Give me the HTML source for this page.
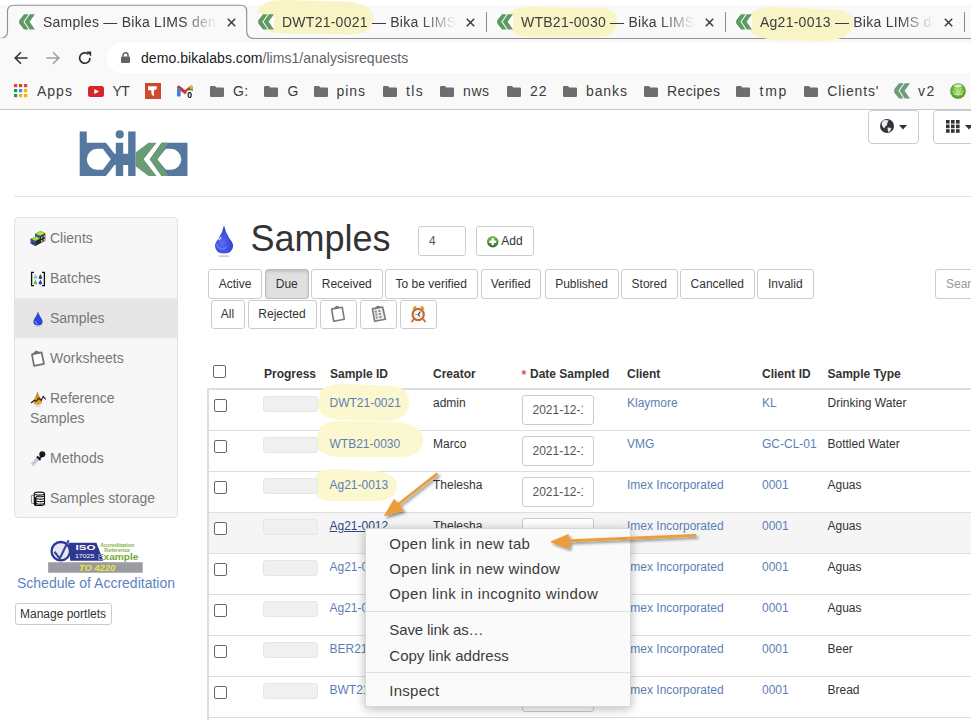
<!DOCTYPE html><html><head><meta charset="utf-8"><style>
html,body{margin:0;padding:0;width:971px;height:720px;overflow:hidden;background:#fff;font-family:"Liberation Sans",sans-serif;}
.a{position:absolute;box-sizing:border-box;}
.t{position:absolute;white-space:nowrap;line-height:normal;}
svg{position:absolute;overflow:visible;}
</style></head><body>

<div class="a" style="left:0px;top:0px;width:971px;height:110px;background:#f9f9f9;"></div>
<div class="a" style="left:0px;top:0px;width:971px;height:5px;background:#fff;"></div>
<div class="a" style="left:247px;top:37.5px;width:724px;height:1.2px;background:#8e8e8e;"></div>
<svg style="left:0;top:0" width="260" height="40"><path d="M0 38.5 Q7.5 38.5 7.5 31 L7.5 11.5 Q7.5 5.3 13.7 5.3 L240.5 5.3 Q246.7 5.3 246.7 11.5 L246.7 31 Q246.7 38.5 254.2 38.5" fill="#f9f9f9" stroke="#8e8e8e" stroke-width="1.1"/><rect x="0" y="38.2" width="251" height="2" fill="#f9f9f9"/></svg>
<div class="a" style="left:485.5px;top:12px;width:1px;height:20px;background:#8a8a8a;"></div>
<div class="a" style="left:724.5px;top:12px;width:1px;height:20px;background:#8a8a8a;"></div>
<div class="a" style="left:963.5px;top:12px;width:1px;height:20px;background:#8a8a8a;"></div>
<svg style="left:0;top:0" width="971" height="45"><g fill="#f9f4c6"><path d="M258 12 Q259 0 285 0 L345 1.5 Q373 3 373 18 Q373 34.6 350 34.6 L285 33.5 Q258 33 258 20 Z"/><path d="M508 20 Q508 7 528 7 L600 7.5 Q617 8 617 21 Q617 37 598 37 L530 37 Q508 37 508 22 Z"/><path d="M748 18 Q752 7 775 7 L840 10 Q854 12 853 24 Q852 41 820 41 L775 40 Q750 38 748 25 Z"/></g></svg>
<svg style="left:19px;top:14px" width="16" height="16" viewBox="0 0 16 16"><rect width="16" height="16" fill="#fff"/><path d="M0.2 6.2 L5 0.2 L9.6 0.2 L4.4 7.8 L9.6 15.4 L5 15.4 L0.2 9.4 Z" fill="#5f9a62"/><path d="M5.6 7.8 L10.8 0.2 L16 0.2 L10.6 7.8 L16 15.4 L10.8 15.4 Z" fill="#5f9a62"/></svg>
<div class="t" style="left:43px;top:13.5px;font-size:14px;color:#3c3c3c;letter-spacing:0.25px;width:174px;overflow:hidden;-webkit-mask-image:linear-gradient(to right,#000 80%,transparent 100%);">Samples — Bika LIMS dem</div>
<svg style="left:227px;top:18px" width="9" height="9" viewBox="0 0 9 9"><path d="M0.8 0.8 L8.2 8.2 M8.2 0.8 L0.8 8.2" stroke="#3c3c3c" stroke-width="1.5"/></svg>
<svg style="left:258px;top:14px" width="16" height="16" viewBox="0 0 16 16"><rect width="16" height="16" fill="#fff"/><path d="M0.2 6.2 L5 0.2 L9.6 0.2 L4.4 7.8 L9.6 15.4 L5 15.4 L0.2 9.4 Z" fill="#5f9a62"/><path d="M5.6 7.8 L10.8 0.2 L16 0.2 L10.6 7.8 L16 15.4 L10.8 15.4 Z" fill="#5f9a62"/></svg>
<div class="t" style="left:282px;top:13.5px;font-size:14px;color:#3c3c3c;letter-spacing:0.25px;width:174px;overflow:hidden;-webkit-mask-image:linear-gradient(to right,#000 80%,transparent 100%);">DWT21-0021 — Bika LIMS</div>
<svg style="left:466px;top:18px" width="9" height="9" viewBox="0 0 9 9"><path d="M0.8 0.8 L8.2 8.2 M8.2 0.8 L0.8 8.2" stroke="#3c3c3c" stroke-width="1.5"/></svg>
<svg style="left:497px;top:14px" width="16" height="16" viewBox="0 0 16 16"><rect width="16" height="16" fill="#fff"/><path d="M0.2 6.2 L5 0.2 L9.6 0.2 L4.4 7.8 L9.6 15.4 L5 15.4 L0.2 9.4 Z" fill="#5f9a62"/><path d="M5.6 7.8 L10.8 0.2 L16 0.2 L10.6 7.8 L16 15.4 L10.8 15.4 Z" fill="#5f9a62"/></svg>
<div class="t" style="left:521px;top:13.5px;font-size:14px;color:#3c3c3c;letter-spacing:0.25px;width:174px;overflow:hidden;-webkit-mask-image:linear-gradient(to right,#000 80%,transparent 100%);">WTB21-0030 — Bika LIMS</div>
<svg style="left:705px;top:18px" width="9" height="9" viewBox="0 0 9 9"><path d="M0.8 0.8 L8.2 8.2 M8.2 0.8 L0.8 8.2" stroke="#3c3c3c" stroke-width="1.5"/></svg>
<svg style="left:736px;top:14px" width="16" height="16" viewBox="0 0 16 16"><rect width="16" height="16" fill="#fff"/><path d="M0.2 6.2 L5 0.2 L9.6 0.2 L4.4 7.8 L9.6 15.4 L5 15.4 L0.2 9.4 Z" fill="#5f9a62"/><path d="M5.6 7.8 L10.8 0.2 L16 0.2 L10.6 7.8 L16 15.4 L10.8 15.4 Z" fill="#5f9a62"/></svg>
<div class="t" style="left:760px;top:13.5px;font-size:14px;color:#3c3c3c;letter-spacing:0.25px;width:174px;overflow:hidden;-webkit-mask-image:linear-gradient(to right,#000 80%,transparent 100%);">Ag21-0013 — Bika LIMS de</div>
<svg style="left:944px;top:18px" width="9" height="9" viewBox="0 0 9 9"><path d="M0.8 0.8 L8.2 8.2 M8.2 0.8 L0.8 8.2" stroke="#3c3c3c" stroke-width="1.5"/></svg>
<svg style="left:14px;top:51px" width="14" height="14" viewBox="0 0 14 14"><path d="M13.5 7 L1.5 7 M7 1.2 L1.2 7 L7 12.8" fill="none" stroke="#333" stroke-width="1.6"/></svg>
<svg style="left:46px;top:51px" width="14" height="14" viewBox="0 0 14 14"><path d="M0.5 7 L12.5 7 M7 1.2 L12.8 7 L7 12.8" fill="none" stroke="#9e9e9e" stroke-width="1.6"/></svg>
<svg style="left:78px;top:51px" width="14" height="14" viewBox="0 0 14 14"><path d="M12 7 A5.2 5.2 0 1 1 10.3 3.2" fill="none" stroke="#333" stroke-width="1.7"/><path d="M8.2 0.6 L13.2 0.6 L13.2 5.6 Z" fill="#333"/></svg>
<div class="a" style="left:107px;top:43px;width:880px;height:30px;background:#fff;border-radius:15px;"></div>
<svg style="left:121px;top:52px" width="9" height="11" viewBox="0 0 9 11"><rect x="0" y="4.5" width="9" height="6.5" rx="1" fill="#5f6368"/><path d="M2 4.8 L2 3.2 A2.5 2.5 0 0 1 7 3.2 L7 4.8" fill="none" stroke="#5f6368" stroke-width="1.5"/></svg>
<div class="t" style="left:141px;top:49.5px;font-size:14px;color:#5f6368;letter-spacing:0.05px;"><span style="color:#202124">demo.bikalabs.com</span>/lims1/analysisrequests</div>
<svg style="left:14px;top:84px" width="14" height="14" viewBox="0 0 14 14"><rect x="0" y="0" width="3.2" height="3.2" fill="#db4437"/><rect x="5" y="0" width="3.2" height="3.2" fill="#db4437"/><rect x="10" y="0" width="3.2" height="3.2" fill="#db4437"/><rect x="0" y="5" width="3.2" height="3.2" fill="#0f9d58"/><rect x="5" y="5" width="3.2" height="3.2" fill="#4285f4"/><rect x="10" y="5" width="3.2" height="3.2" fill="#f4b400"/><rect x="0" y="10" width="3.2" height="3.2" fill="#0f9d58"/><rect x="5" y="10" width="3.2" height="3.2" fill="#f4b400"/><rect x="10" y="10" width="3.2" height="3.2" fill="#f4b400"/></svg>
<div class="t" style="left:37px;top:83px;font-size:14px;color:#3c3c3c;letter-spacing:1.0px;">Apps</div>
<svg style="left:88px;top:85.5px" width="16" height="11" viewBox="0 0 16 11"><rect width="16" height="11" rx="2.5" fill="#d4262b"/><path d="M6.3 3 L11 5.5 L6.3 8 Z" fill="#fff"/></svg>
<div class="t" style="left:112.5px;top:83px;font-size:14px;color:#3c3c3c;letter-spacing:-0.5px;">YT</div>
<svg style="left:145px;top:83px" width="16" height="16" viewBox="0 0 16 16"><rect width="16" height="16" fill="#cf4a2d"/><path d="M3 3.3 L11.5 3.3 L12 4.4 L11 7.2 L10.4 6.4 L9 7.2 L8.8 13.6 L6.6 11.6 L6.2 7.2 L3 7.2 Z" fill="#fff"/></svg>
<svg style="left:177px;top:84px" width="17" height="15" viewBox="0 0 17 15"><path d="M1.8 3.2 L8 8.2 L14.2 3.2" fill="none" stroke="#c5392f" stroke-width="3.4" stroke-linejoin="round" stroke-linecap="round"/><rect x="0" y="4.2" width="3.7" height="8.3" rx="0.8" fill="#4a7bea"/><rect x="12.6" y="4.3" width="3.2" height="4" fill="#3e9a48"/><circle cx="14.3" cy="3.3" r="1.7" fill="#e3b52b"/><rect x="9.6" y="6.4" width="6.6" height="8.4" rx="1.5" fill="#fff"/><text x="10.2" y="13.9" font-size="8.6" font-weight="bold" font-family="Liberation Sans" fill="#000">0</text></svg>
<svg style="left:210px;top:85.5px" width="14" height="11" viewBox="0 0 14 11"><path d="M0 1.2 Q0 0 1.2 0 L5 0 L6.3 1.5 L12.8 1.5 Q14 1.5 14 2.7 L14 9.8 Q14 11 12.8 11 L1.2 11 Q0 11 0 9.8 Z" fill="#6e6e6e"/></svg>
<div class="t" style="left:233px;top:83px;font-size:14px;color:#3c3c3c;letter-spacing:0.4px;">G:</div>
<svg style="left:264px;top:85.5px" width="14" height="11" viewBox="0 0 14 11"><path d="M0 1.2 Q0 0 1.2 0 L5 0 L6.3 1.5 L12.8 1.5 Q14 1.5 14 2.7 L14 9.8 Q14 11 12.8 11 L1.2 11 Q0 11 0 9.8 Z" fill="#6e6e6e"/></svg>
<div class="t" style="left:287.5px;top:83px;font-size:14px;color:#3c3c3c;letter-spacing:0.4px;">G</div>
<svg style="left:314px;top:85.5px" width="14" height="11" viewBox="0 0 14 11"><path d="M0 1.2 Q0 0 1.2 0 L5 0 L6.3 1.5 L12.8 1.5 Q14 1.5 14 2.7 L14 9.8 Q14 11 12.8 11 L1.2 11 Q0 11 0 9.8 Z" fill="#6e6e6e"/></svg>
<div class="t" style="left:336.5px;top:83px;font-size:14px;color:#3c3c3c;letter-spacing:0.9px;">pins</div>
<svg style="left:383px;top:85.5px" width="14" height="11" viewBox="0 0 14 11"><path d="M0 1.2 Q0 0 1.2 0 L5 0 L6.3 1.5 L12.8 1.5 Q14 1.5 14 2.7 L14 9.8 Q14 11 12.8 11 L1.2 11 Q0 11 0 9.8 Z" fill="#6e6e6e"/></svg>
<div class="t" style="left:406px;top:83px;font-size:14px;color:#3c3c3c;letter-spacing:1.4px;">tls</div>
<svg style="left:439.5px;top:85.5px" width="14" height="11" viewBox="0 0 14 11"><path d="M0 1.2 Q0 0 1.2 0 L5 0 L6.3 1.5 L12.8 1.5 Q14 1.5 14 2.7 L14 9.8 Q14 11 12.8 11 L1.2 11 Q0 11 0 9.8 Z" fill="#6e6e6e"/></svg>
<div class="t" style="left:463px;top:83px;font-size:14px;color:#3c3c3c;letter-spacing:0.6px;">nws</div>
<svg style="left:507px;top:85.5px" width="14" height="11" viewBox="0 0 14 11"><path d="M0 1.2 Q0 0 1.2 0 L5 0 L6.3 1.5 L12.8 1.5 Q14 1.5 14 2.7 L14 9.8 Q14 11 12.8 11 L1.2 11 Q0 11 0 9.8 Z" fill="#6e6e6e"/></svg>
<div class="t" style="left:530px;top:83px;font-size:14px;color:#3c3c3c;letter-spacing:1.0px;">22</div>
<svg style="left:563px;top:85.5px" width="14" height="11" viewBox="0 0 14 11"><path d="M0 1.2 Q0 0 1.2 0 L5 0 L6.3 1.5 L12.8 1.5 Q14 1.5 14 2.7 L14 9.8 Q14 11 12.8 11 L1.2 11 Q0 11 0 9.8 Z" fill="#6e6e6e"/></svg>
<div class="t" style="left:586px;top:83px;font-size:14px;color:#3c3c3c;letter-spacing:0.9px;">banks</div>
<svg style="left:644px;top:85.5px" width="14" height="11" viewBox="0 0 14 11"><path d="M0 1.2 Q0 0 1.2 0 L5 0 L6.3 1.5 L12.8 1.5 Q14 1.5 14 2.7 L14 9.8 Q14 11 12.8 11 L1.2 11 Q0 11 0 9.8 Z" fill="#6e6e6e"/></svg>
<div class="t" style="left:667px;top:83px;font-size:14px;color:#3c3c3c;letter-spacing:0.4px;">Recipes</div>
<svg style="left:736px;top:85.5px" width="14" height="11" viewBox="0 0 14 11"><path d="M0 1.2 Q0 0 1.2 0 L5 0 L6.3 1.5 L12.8 1.5 Q14 1.5 14 2.7 L14 9.8 Q14 11 12.8 11 L1.2 11 Q0 11 0 9.8 Z" fill="#6e6e6e"/></svg>
<div class="t" style="left:759.6px;top:83px;font-size:14px;color:#3c3c3c;letter-spacing:1.7px;">tmp</div>
<svg style="left:804px;top:85.5px" width="14" height="11" viewBox="0 0 14 11"><path d="M0 1.2 Q0 0 1.2 0 L5 0 L6.3 1.5 L12.8 1.5 Q14 1.5 14 2.7 L14 9.8 Q14 11 12.8 11 L1.2 11 Q0 11 0 9.8 Z" fill="#6e6e6e"/></svg>
<div class="t" style="left:827.3px;top:83px;font-size:14px;color:#3c3c3c;letter-spacing:0.8px;">Clients'</div>
<svg style="left:894px;top:83px" width="16" height="16" viewBox="0 0 16 16"><rect width="16" height="16" fill="#f9f9f9"/><path d="M0.2 6.2 L5 0.2 L9.6 0.2 L4.4 7.8 L9.6 15.4 L5 15.4 L0.2 9.4 Z" fill="#6b9e78"/><path d="M5.6 7.8 L10.8 0.2 L16 0.2 L10.6 7.8 L16 15.4 L10.8 15.4 Z" fill="#6b9e78"/></svg>
<div class="t" style="left:918px;top:83px;font-size:14px;color:#3c3c3c;letter-spacing:1.5px;">v2</div>
<svg style="left:950px;top:83px" width="16" height="16" viewBox="0 0 16 16"><defs><radialGradient id="gb" cx="0.5" cy="0.45" r="0.6"><stop offset="0" stop-color="#9bd860"/><stop offset="0.75" stop-color="#5ea52a"/><stop offset="1" stop-color="#2f6d14"/></radialGradient></defs><circle cx="8" cy="8" r="7.8" fill="url(#gb)"/><g stroke="#d8f5b0" stroke-width="0.9" opacity="0.85"><path d="M8 12 L8 3.5 M8 12 L4.5 4.8 M8 12 L11.5 4.8 M8 12 L2.5 8 M8 12 L13.5 8 M8 12 L3 11 M8 12 L13 11"/></g><ellipse cx="8" cy="2.8" rx="4" ry="1.5" fill="#fff" opacity="0.7"/></svg>
<div class="a" style="left:0px;top:109px;width:971px;height:1px;background:#c8c8c8;"></div>
<div class="a" style="left:867.5px;top:110px;width:51px;height:33.5px;border:1px solid #ccc;border-radius:4px;background:#fff;"></div>
<svg style="left:880px;top:118.5px" width="14" height="14" viewBox="0 0 14 14"><circle cx="7" cy="7" r="7" fill="#333"/><path d="M3.2 1.4 Q6 0.3 8.6 1.6 Q7.6 3.2 7.2 4.8 Q7.4 6.4 5.6 7.2 Q4.4 8 4.8 9.6 Q2.6 8.4 1.8 6.2 Q1.4 3.6 3.2 1.4 Z M7.6 8.4 Q10.2 8.2 11.4 9.8 Q10.6 12.4 8.4 13.2 Q7.4 11 7.6 8.4 Z" fill="#e4edf9"/></svg>
<svg style="left:898.5px;top:125px" width="8" height="5" viewBox="0 0 8 5"><path d="M0 0 L8 0 L4 4.5 Z" fill="#333"/></svg>
<div class="a" style="left:933px;top:110px;width:60px;height:33.5px;border:1px solid #ccc;border-radius:4px;background:#fff;"></div>
<svg style="left:946px;top:120px" width="14" height="13" viewBox="0 0 14 13"><rect x="0" y="0.0" width="3.6" height="3.6" fill="#333"/><rect x="5" y="0.0" width="3.6" height="3.6" fill="#333"/><rect x="10" y="0.0" width="3.6" height="3.6" fill="#333"/><rect x="0" y="4.6" width="3.6" height="3.6" fill="#333"/><rect x="5" y="4.6" width="3.6" height="3.6" fill="#333"/><rect x="10" y="4.6" width="3.6" height="3.6" fill="#333"/><rect x="0" y="9.2" width="3.6" height="3.6" fill="#333"/><rect x="5" y="9.2" width="3.6" height="3.6" fill="#333"/><rect x="10" y="9.2" width="3.6" height="3.6" fill="#333"/></svg>
<svg style="left:964.5px;top:125px" width="8" height="5" viewBox="0 0 8 5"><path d="M0 0 L8 0 L4 4.5 Z" fill="#333"/></svg>
<svg style="left:75px;top:126px" width="120" height="54" viewBox="0 0 971 437">
<g fill="#55789f">
<path fill-rule="evenodd" d="M38 45 L95 45 L95 135 L250 135 L320 225 L330 225 L330 135 L390 135 L390 225 L430 225 L430 45 L490 45 L490 405 L430 405 L430 315 L390 315 L390 405 L330 405 L330 315 L320 315 L250 405 L38 405 Z M180 185 L225 185 L290 270 L225 355 L180 355 A85 85 0 0 1 180 185 Z"/>
<circle cx="362" cy="68" r="33"/>
<path fill-rule="evenodd" d="M700 135 L910 135 L910 405 L700 405 L605 270 Z M665 270 L735 185 L775 185 A85 85 0 0 1 775 355 L735 355 Z"/>
</g>
<g fill="#6a9b73">
<path d="M490 215 L595 135 L660 135 L555 270 L660 405 L595 405 L490 325 Z"/>
<path d="M605 270 L700 135 L755 135 L665 270 L755 405 L700 405 Z"/>
</g>
</svg>
<div class="a" style="left:14px;top:196px;width:957px;height:1px;background:#e5e5e5;"></div>
<div class="a" style="left:14px;top:217px;width:164px;height:301px;background:#f7f7f7;border:1px solid #e3e3e3;border-radius:4px;"></div>
<div class="a" style="left:15px;top:298px;width:162px;height:40px;background:#e6e6e6;"></div>
<div class="t" style="left:50px;top:230px;font-size:14px;color:#777;">Clients</div>
<div class="t" style="left:50px;top:270px;font-size:14px;color:#777;">Batches</div>
<div class="t" style="left:50px;top:310px;font-size:14px;color:#777;">Samples</div>
<div class="t" style="left:50px;top:350px;font-size:14px;color:#777;">Worksheets</div>
<div class="t" style="left:50px;top:390px;font-size:14px;color:#777;">Reference</div>
<div class="t" style="left:50px;top:450px;font-size:14px;color:#777;">Methods</div>
<div class="t" style="left:50px;top:490px;font-size:14px;color:#777;">Samples storage</div>
<div class="t" style="left:30px;top:409.5px;font-size:14px;color:#777;">Samples</div>
<svg style="left:26px;top:226px" width="24" height="24" viewBox="0 0 24 24"><path d="M9 7.8 L14.7 5 L19.3 7.2 L19.3 14.8 L14 17.5 L9 15 Z" fill="#2a2a18"/><path d="M9 7.8 L14.7 5 L19.3 7.2 L14 10 Z" fill="#a6e03a"/><path d="M9 7.8 L14 10 L14 13.5 L9 11.5 Z" fill="#3d4fb8"/><path d="M4.7 12.7 L10 10.4 L14 12.5 L14 17.5 L9.5 20 L4.7 17.5 Z" fill="#2a2a18"/><path d="M4.7 12.7 L10 10.4 L14 12.5 L9.5 15 Z" fill="#a6e03a"/><path d="M4.7 12.7 L9.5 15 L9.5 20 L8 19.2 L8 17 L6.3 16.2 L6.3 18.4 L4.7 17.5 Z" fill="#3d4fb8"/><g fill="#c8cff0"><rect x="15.2" y="10.5" width="1.2" height="2"/><rect x="17.6" y="9.3" width="1.2" height="2"/><rect x="15.2" y="14" width="1.2" height="2"/><rect x="17.6" y="12.8" width="1.2" height="2"/></g></svg>
<svg style="left:26px;top:266px" width="24" height="24" viewBox="0 0 24 24"><path d="M8 6.3 L5.6 6.3 L5.6 19.7 L8 19.7 M16 6.3 L18.4 6.3 L18.4 19.7 L16 19.7" fill="none" stroke="#111" stroke-width="1.3"/><path d="M9.5 8.0 Q10.1 9.6 11.1 10.9 Q11.5 11.6 11.3 12.0 Q10.9 12.899999999999999 9.5 12.899999999999999 Q8.1 12.899999999999999 7.7 12.0 Q7.5 11.6 7.9 10.9 Q8.9 9.6 9.5 8.0 Z" fill="#7fd0d0"/><path d="M14.4 8.0 Q15.0 9.6 16.0 10.9 Q16.4 11.6 16.2 12.0 Q15.8 12.899999999999999 14.4 12.899999999999999 Q13.0 12.899999999999999 12.6 12.0 Q12.4 11.6 12.8 10.9 Q13.8 9.6 14.4 8.0 Z" fill="#444"/><path d="M9.5 13.6 Q10.1 15.2 11.1 16.5 Q11.5 17.2 11.3 17.599999999999998 Q10.9 18.5 9.5 18.5 Q8.1 18.5 7.7 17.599999999999998 Q7.5 17.2 7.9 16.5 Q8.9 15.2 9.5 13.6 Z" fill="#6cc040"/><path d="M14.4 13.6 Q15.0 15.2 16.0 16.5 Q16.4 17.2 16.2 17.599999999999998 Q15.8 18.5 14.4 18.5 Q13.0 18.5 12.6 17.599999999999998 Q12.4 17.2 12.8 16.5 Q13.8 15.2 14.4 13.6 Z" fill="#2a3ee8"/></svg>
<svg style="left:32px;top:311px" width="12" height="16" viewBox="0 0 12 16"><path d="M6 0.5 Q7 4 9.5 7.5 Q11 10 10.5 12 Q9.5 14.5 6 14.5 Q2.5 14.5 1.5 12 Q1 10 2.5 7.5 Q5 4 6 0.5 Z" fill="#2f45d8"/><path d="M3.5 10 Q3.5 12.5 5.5 13" fill="none" stroke="#8fa0ff" stroke-width="1"/><ellipse cx="6" cy="15.5" rx="4" ry="0.6" fill="#ccc"/></svg>
<svg style="left:26px;top:346px" width="24" height="24" viewBox="0 0 24 24"><path d="M6 8.3 L15.6 6.4 L18 17.8 L8 19.8 Z" fill="#fff" stroke="#707070" stroke-width="1.7" stroke-linejoin="round"/><path d="M7.5 7.6 L10 5.2 L13.5 6.5 Z" fill="#707070" stroke="#707070" stroke-width="1.2"/></svg>
<svg style="left:26px;top:386px" width="24" height="24" viewBox="0 0 24 24"><defs><linearGradient id="rg" x1="0" y1="0" x2="0" y2="1"><stop offset="0" stop-color="#c07020"/><stop offset="1" stop-color="#eaa845"/></linearGradient></defs><path d="M11.5 5.3 Q12.3 9 14.5 12 Q16.2 14.5 16 16 Q15.5 19 11.6 19 Q7.6 19 7.3 16 Q7.2 14 9 11.5 Q11 8.5 11.5 5.3 Z" fill="url(#rg)"/><path d="M5 17 L8.3 14.3 L10 15.3 L12.7 12.3 L15.3 14.3 L17.3 10.3 L19.7 13.3" fill="none" stroke="#222" stroke-width="1.1" stroke-linejoin="round"/><ellipse cx="12" cy="20.3" rx="3" ry="0.6" fill="#ccc"/></svg>
<svg style="left:26px;top:446px" width="24" height="24" viewBox="0 0 24 24"><path d="M6 19 L12.5 12" stroke="#c3cbdd" stroke-width="3.6"/><path d="M11 10.5 L14.5 14" stroke="#111" stroke-width="1.8"/><path d="M13.6 12.1 L15.6 10.3" stroke="#222" stroke-width="2"/><circle cx="16.3" cy="8.3" r="3" fill="#1a1a1a"/></svg>
<svg style="left:26px;top:486px" width="24" height="24" viewBox="0 0 24 24"><path d="M5.3 9.6 L8.3 9.2 L8.3 17.6 L5.6 17.2 Z" fill="#fff" stroke="#888" stroke-width="1"/><g fill="#fff" stroke="#111" stroke-width="1.1"><path d="M8.3 7.6 A5.1 1.5 0 0 1 18.5 7.6 L18.5 18 A5.1 1.5 0 0 1 8.3 18 Z"/></g><g fill="none" stroke="#111" stroke-width="1.1"><path d="M8.3 7.6 A5.1 1.5 0 0 0 18.5 7.6"/><path d="M10 10.2 A5.1 1.5 0 0 0 18.5 10"/><path d="M10 12.6 A5.1 1.5 0 0 0 18.5 12.4"/><path d="M10 15.1 A5.1 1.5 0 0 0 18.5 14.9"/><path d="M10 17.6 A5.1 1.5 0 0 0 18.5 17.4"/></g><rect x="8.2" y="11" width="2.3" height="8.6" fill="#111"/></svg>
<svg style="left:45px;top:536px" width="102" height="40" viewBox="0 0 971 381">
<rect x="30" y="250" width="900" height="100" fill="#9b9ba2"/>
<text x="322" y="336" font-size="84" font-weight="bold" font-style="italic" font-family="Liberation Sans" fill="#e8e838" textLength="348" lengthAdjust="spacingAndGlyphs">TO 4220</text>
<path d="M225 65 L490 65 L555 235 L240 235 Z" fill="#2e3792"/>
<circle cx="150" cy="145" r="88" fill="#e6e8f4" stroke="#2e3792" stroke-width="22"/>
<path d="M90 150 L140 215 L225 40" fill="none" stroke="#3a45a0" stroke-width="20"/>
<text x="290" y="130" font-size="70" font-weight="bold" font-family="Liberation Sans" fill="#fff" textLength="190" lengthAdjust="spacingAndGlyphs">ISO</text>
<text x="285" y="205" font-size="58" font-family="Liberation Sans" fill="#fff" textLength="185" lengthAdjust="spacingAndGlyphs">17025</text>
<text x="525" y="105" font-size="48" font-weight="bold" font-family="Liberation Sans" fill="#86b04a" textLength="325" lengthAdjust="spacingAndGlyphs">Accreditation</text>
<text x="565" y="150" font-size="44" font-weight="bold" font-family="Liberation Sans" fill="#86b04a" textLength="245" lengthAdjust="spacingAndGlyphs">Reference</text>
<text x="500" y="230" font-size="90" font-weight="bold" font-family="Liberation Sans" fill="#7a8aa8">E</text>
<text x="558" y="230" font-size="90" font-weight="bold" font-family="Liberation Sans" fill="#76a833" textLength="332" lengthAdjust="spacingAndGlyphs">xample</text>
</svg>
<div class="t" style="left:17px;top:575px;font-size:14px;color:#5b84bf;">Schedule of Accreditation</div>
<div class="a" style="left:14.5px;top:603px;width:97px;height:22px;border:1px solid #ccc;border-radius:3px;background:#fff;"></div>
<div class="t" style="left:20px;top:607px;font-size:12px;color:#333;">Manage portlets</div>
<svg style="left:213px;top:224px" width="22" height="34" viewBox="0 0 22 34"><defs><radialGradient id="dg" cx="0.4" cy="0.65" r="0.75"><stop offset="0" stop-color="#5a6cf0"/><stop offset="1" stop-color="#2233d6"/></radialGradient></defs><path d="M11 1.3 Q12.5 9 16.5 14.5 Q20.3 19 20.1 22 Q19.5 29.4 11 29.4 Q2.5 29.4 2 22 Q1.8 19 5.5 14.5 Q9.5 9 11 1.3 Z" fill="url(#dg)"/><path d="M5.2 15.6 L7.6 12.8 L8.6 14 L6.2 16.4 Z" fill="#fff" opacity="0.75"/><path d="M3.6 20 Q4.5 24.5 9 25 Q12 25 13.5 23" fill="none" stroke="#8d9cff" stroke-width="1.2" opacity="0.6"/><ellipse cx="11" cy="32.2" rx="5.8" ry="0.9" fill="#c8c8c8"/></svg>
<div class="t" style="left:250.5px;top:218px;font-size:36px;color:#333;">Samples</div>
<div class="a" style="left:418px;top:226px;width:48px;height:29.5px;border:1px solid #ccc;border-radius:3px;background:#fff;"></div>
<div class="t" style="left:429px;top:234px;font-size:12px;color:#555;">4</div>
<div class="a" style="left:476px;top:226px;width:58px;height:29.5px;border:1px solid #ccc;border-radius:3px;background:#fff;"></div>
<svg style="left:487px;top:236px" width="11.5" height="11.5" viewBox="0 0 11 11"><defs><linearGradient id="pg" x1="0" y1="0" x2="0" y2="1"><stop offset="0" stop-color="#7cc05a"/><stop offset="1" stop-color="#2e6a1c"/></linearGradient></defs><circle cx="5.5" cy="5.5" r="5.5" fill="url(#pg)"/><path d="M5.5 2.2 L5.5 8.8 M2.2 5.5 L8.8 5.5" stroke="#fff" stroke-width="2.2"/></svg>
<div class="t" style="left:501.3px;top:234px;font-size:12px;color:#333;">Add</div>
<div class="a" style="left:208px;top:269px;width:54px;height:29.5px;border:1px solid #ccc;border-radius:3px;background:#fff;"></div>
<div class="t" style="left:208px;width:54px;text-align:center;top:277px;font-size:12px;color:#333">Active</div>
<div class="a" style="left:265px;top:269px;width:43.5px;height:29.5px;border:1px solid #ccc;border-radius:3px;background:#e0e0e0;box-shadow:inset 0 2px 3px rgba(0,0,0,0.13);border-color:#bbb;"></div>
<div class="t" style="left:265px;width:43.5px;text-align:center;top:277px;font-size:12px;color:#333">Due</div>
<div class="a" style="left:311px;top:269px;width:71.5px;height:29.5px;border:1px solid #ccc;border-radius:3px;background:#fff;"></div>
<div class="t" style="left:311px;width:71.5px;text-align:center;top:277px;font-size:12px;color:#333">Received</div>
<div class="a" style="left:385px;top:269px;width:92.5px;height:29.5px;border:1px solid #ccc;border-radius:3px;background:#fff;"></div>
<div class="t" style="left:385px;width:92.5px;text-align:center;top:277px;font-size:12px;color:#333">To be verified</div>
<div class="a" style="left:480.5px;top:269px;width:60.5px;height:29.5px;border:1px solid #ccc;border-radius:3px;background:#fff;"></div>
<div class="t" style="left:480.5px;width:60.5px;text-align:center;top:277px;font-size:12px;color:#333">Verified</div>
<div class="a" style="left:544.5px;top:269px;width:74.0px;height:29.5px;border:1px solid #ccc;border-radius:3px;background:#fff;"></div>
<div class="t" style="left:544.5px;width:74.0px;text-align:center;top:277px;font-size:12px;color:#333">Published</div>
<div class="a" style="left:621px;top:269px;width:56.5px;height:29.5px;border:1px solid #ccc;border-radius:3px;background:#fff;"></div>
<div class="t" style="left:621px;width:56.5px;text-align:center;top:277px;font-size:12px;color:#333">Stored</div>
<div class="a" style="left:680px;top:269px;width:74.5px;height:29.5px;border:1px solid #ccc;border-radius:3px;background:#fff;"></div>
<div class="t" style="left:680px;width:74.5px;text-align:center;top:277px;font-size:12px;color:#333">Cancelled</div>
<div class="a" style="left:757px;top:269px;width:56.5px;height:29.5px;border:1px solid #ccc;border-radius:3px;background:#fff;"></div>
<div class="t" style="left:757px;width:56.5px;text-align:center;top:277px;font-size:12px;color:#333">Invalid</div>
<div class="a" style="left:210.5px;top:299.5px;width:34.0px;height:29.5px;border:1px solid #ccc;border-radius:3px;background:#fff;"></div>
<div class="t" style="left:210.5px;width:34.0px;text-align:center;top:307px;font-size:12px;color:#333">All</div>
<div class="a" style="left:247.5px;top:299.5px;width:69.0px;height:29.5px;border:1px solid #ccc;border-radius:3px;background:#fff;"></div>
<div class="t" style="left:247.5px;width:69.0px;text-align:center;top:307px;font-size:12px;color:#333">Rejected</div>
<div class="a" style="left:319.5px;top:299.5px;width:37.0px;height:29.5px;border:1px solid #ccc;border-radius:3px;background:#fff;"></div>
<div class="a" style="left:359.5px;top:299.5px;width:37.0px;height:29.5px;border:1px solid #ccc;border-radius:3px;background:#fff;"></div>
<div class="a" style="left:399.5px;top:299.5px;width:37.0px;height:29.5px;border:1px solid #ccc;border-radius:3px;background:#fff;"></div>
<svg style="left:325px;top:300px" width="30" height="26" viewBox="0 0 30 26"><path d="M6.6 9.1 L17.2 7.2 L19.3 19.2 L8.7 21.2 Z" fill="#fff" stroke="#7a7a7a" stroke-width="1.6" stroke-linejoin="round"/><path d="M9.5 8.2 L11.5 6 L14.5 7.4 Z" fill="#777" stroke="#777" stroke-width="1"/></svg>
<svg style="left:366px;top:300px" width="30" height="26" viewBox="0 0 30 26"><path d="M6.4 8.9 L16.6 7.0 L19.4 19.2 L8.6 21.2 Z" fill="#ececec" stroke="#7a7a7a" stroke-width="1.6" stroke-linejoin="round"/><path d="M9.5 8 L11.5 6 L14.5 7.2 Z" fill="#777" stroke="#777" stroke-width="1"/><g fill="#8a8a8a"><rect x="8.8" y="10.6" width="2" height="2"/><rect x="12.4" y="10" width="2" height="2"/><rect x="9.3" y="13.6" width="2" height="2"/><rect x="12.9" y="13" width="2" height="2"/><rect x="9.8" y="16.6" width="2" height="2"/><rect x="13.4" y="16" width="2" height="2"/></g></svg>
<svg style="left:405px;top:302px" width="27" height="24" viewBox="0 0 27 24"><path d="M7.5 7.5 Q8 3.8 11.5 3.8 Q12 6 9.5 8 Z M19.5 7.5 Q19 3.8 15.5 3.8 Q15 6 17.5 8 Z" fill="#c9ae2c"/><path d="M8.5 17.5 L7 19.5 M18.5 17.5 L20 19.5" stroke="#c8692a" stroke-width="1.8" stroke-linecap="round"/><circle cx="13.2" cy="12.5" r="5.6" fill="#f4f8fc" stroke="#c8692a" stroke-width="2.2"/><path d="M13.3 12.6 L15.4 9.5 M13.3 12.6 L15 14.5" stroke="#333" stroke-width="1.1"/><path d="M10.2 12.5 L13.2 12.5" stroke="#c44" stroke-width="0.6"/></svg>
<div class="a" style="left:935px;top:269px;width:60px;height:29.5px;border:1px solid #ccc;border-radius:3px;background:#fff;"></div>
<div class="t" style="left:946px;top:277px;font-size:12px;color:#999;">Search</div>
<div class="a" style="left:213px;top:365px;width:13px;height:13px;border:1px solid #666;border-radius:2px;background:#fff"></div>
<div class="t" style="left:264px;top:366.8px;font-size:12px;color:#333;font-weight:bold;">Progress</div>
<div class="t" style="left:330px;top:366.8px;font-size:12px;color:#333;font-weight:bold;">Sample ID</div>
<div class="t" style="left:433px;top:366.8px;font-size:12px;color:#333;font-weight:bold;">Creator</div>
<div class="t" style="left:530px;top:366.8px;font-size:12px;color:#333;font-weight:bold;">Date Sampled</div>
<div class="t" style="left:627px;top:366.8px;font-size:12px;color:#333;font-weight:bold;">Client</div>
<div class="t" style="left:762px;top:366.8px;font-size:12px;color:#333;font-weight:bold;">Client ID</div>
<div class="t" style="left:827.5px;top:366.8px;font-size:12px;color:#333;font-weight:bold;">Sample Type</div>
<div class="t" style="left:521.5px;top:367.5px;font-size:12px;color:#d9534f;font-weight:bold;">*</div>
<div class="a" style="left:208px;top:388px;width:763px;height:2px;background:#ddd;"></div>
<div class="a" style="left:207px;top:388px;width:1.7px;height:332px;background:#ddd;"></div>
<div class="a" style="left:208.7px;top:513px;width:763px;height:40px;background:#f5f5f5;"></div>
<div class="a" style="left:208.7px;top:430px;width:763px;height:1px;background:#ddd;"></div>
<div class="a" style="left:208.7px;top:471px;width:763px;height:1px;background:#ddd;"></div>
<div class="a" style="left:208.7px;top:512px;width:763px;height:1px;background:#ddd;"></div>
<div class="a" style="left:208.7px;top:553px;width:763px;height:1px;background:#ddd;"></div>
<div class="a" style="left:208.7px;top:594px;width:763px;height:1px;background:#ddd;"></div>
<div class="a" style="left:208.7px;top:635px;width:763px;height:1px;background:#ddd;"></div>
<div class="a" style="left:208.7px;top:676px;width:763px;height:1px;background:#ddd;"></div>
<div class="a" style="left:208.7px;top:717px;width:763px;height:1px;background:#ddd;"></div>
<svg style="left:0;top:0" width="971" height="720"><g fill="#fbf7cf"><path d="M320 392 Q326 383 345 384 L395 386 Q410 390 409 403 Q408 419 390 421 L340 420 Q318 418 318 404 Z"/><path d="M318 431 Q322 420 345 421 L400 422 Q424 426 423 441 Q421 457 400 457 L340 457 Q316 455 316 442 Z"/><path d="M314 478 Q318 469 335 469 L375 471 Q397 474 397 486 Q396 501 375 501 L330 501 Q313 499 313 487 Z"/></g></svg>
<div class="a" style="left:214px;top:399.0px;width:13px;height:13px;border:1px solid #666;border-radius:2px;background:#fff"></div>
<div class="a" style="left:263px;top:395.5px;width:55px;height:16.5px;background:#f0f0f0;border:1px solid #e6e6e6;border-radius:3px;"></div>
<div class="t" style="left:329.5px;top:395.8px;font-size:12px;color:#5b7fb5;">DWT21-0021</div>
<div class="t" style="left:433px;top:395.8px;font-size:12px;color:#333;">admin</div>
<div class="a" style="left:521.8px;top:394.5px;width:72.4px;height:30.6px;border:1px solid #ccc;border-radius:3px;background:#fff;"></div>
<div class="t" style="left:532.5px;top:403.0px;width:50px;overflow:hidden;font-size:12px;color:#555">2021-12-1</div>
<div class="t" style="left:627px;top:395.8px;font-size:12px;color:#5b7fb5;">Klaymore</div>
<div class="t" style="left:762px;top:395.8px;font-size:12px;color:#5b7fb5;">KL</div>
<div class="t" style="left:827.5px;top:395.8px;font-size:12px;color:#333;">Drinking Water</div>
<div class="a" style="left:214px;top:440.0px;width:13px;height:13px;border:1px solid #666;border-radius:2px;background:#fff"></div>
<div class="a" style="left:263px;top:436.5px;width:55px;height:16.5px;background:#f0f0f0;border:1px solid #e6e6e6;border-radius:3px;"></div>
<div class="t" style="left:329.5px;top:436.8px;font-size:12px;color:#5b7fb5;">WTB21-0030</div>
<div class="t" style="left:433px;top:436.8px;font-size:12px;color:#333;">Marco</div>
<div class="a" style="left:521.8px;top:435.5px;width:72.4px;height:30.6px;border:1px solid #ccc;border-radius:3px;background:#fff;"></div>
<div class="t" style="left:532.5px;top:444.0px;width:50px;overflow:hidden;font-size:12px;color:#555">2021-12-1</div>
<div class="t" style="left:627px;top:436.8px;font-size:12px;color:#5b7fb5;">VMG</div>
<div class="t" style="left:762px;top:436.8px;font-size:12px;color:#5b7fb5;">GC-CL-01</div>
<div class="t" style="left:827.5px;top:436.8px;font-size:12px;color:#333;">Bottled Water</div>
<div class="a" style="left:214px;top:481.0px;width:13px;height:13px;border:1px solid #666;border-radius:2px;background:#fff"></div>
<div class="a" style="left:263px;top:477.5px;width:55px;height:16.5px;background:#f0f0f0;border:1px solid #e6e6e6;border-radius:3px;"></div>
<div class="t" style="left:329.5px;top:477.8px;font-size:12px;color:#5b7fb5;">Ag21-0013</div>
<div class="t" style="left:433px;top:477.8px;font-size:12px;color:#333;">Thelesha</div>
<div class="a" style="left:521.8px;top:476.5px;width:72.4px;height:30.6px;border:1px solid #ccc;border-radius:3px;background:#fff;"></div>
<div class="t" style="left:532.5px;top:485.0px;width:50px;overflow:hidden;font-size:12px;color:#555">2021-12-1</div>
<div class="t" style="left:627px;top:477.8px;font-size:12px;color:#5b7fb5;">Imex Incorporated</div>
<div class="t" style="left:762px;top:477.8px;font-size:12px;color:#5b7fb5;">0001</div>
<div class="t" style="left:827.5px;top:477.8px;font-size:12px;color:#333;">Aguas</div>
<div class="a" style="left:214px;top:522.0px;width:13px;height:13px;border:1px solid #666;border-radius:2px;background:#fff"></div>
<div class="a" style="left:263px;top:518.5px;width:55px;height:16.5px;background:#f0f0f0;border:1px solid #e6e6e6;border-radius:3px;"></div>
<div class="t" style="left:329.5px;top:518.8px;font-size:12px;color:#2a4a7f;text-decoration:underline;">Ag21-0012</div>
<div class="t" style="left:433px;top:518.8px;font-size:12px;color:#333;">Thelesha</div>
<div class="a" style="left:521.8px;top:517.5px;width:72.4px;height:30.6px;border:1px solid #ccc;border-radius:3px;background:#fff;"></div>
<div class="t" style="left:532.5px;top:526.0px;width:50px;overflow:hidden;font-size:12px;color:#555">2021-12-1</div>
<div class="t" style="left:627px;top:518.8px;font-size:12px;color:#5b7fb5;">Imex Incorporated</div>
<div class="t" style="left:762px;top:518.8px;font-size:12px;color:#5b7fb5;">0001</div>
<div class="t" style="left:827.5px;top:518.8px;font-size:12px;color:#333;">Aguas</div>
<div class="a" style="left:214px;top:563.0px;width:13px;height:13px;border:1px solid #666;border-radius:2px;background:#fff"></div>
<div class="a" style="left:263px;top:559.5px;width:55px;height:16.5px;background:#f0f0f0;border:1px solid #e6e6e6;border-radius:3px;"></div>
<div class="t" style="left:329.5px;top:559.8px;font-size:12px;color:#5b7fb5;">Ag21-0011</div>
<div class="t" style="left:433px;top:559.8px;font-size:12px;color:#333;">Thelesha</div>
<div class="a" style="left:521.8px;top:558.5px;width:72.4px;height:30.6px;border:1px solid #ccc;border-radius:3px;background:#fff;"></div>
<div class="t" style="left:532.5px;top:567.0px;width:50px;overflow:hidden;font-size:12px;color:#555">2021-12-1</div>
<div class="t" style="left:627px;top:559.8px;font-size:12px;color:#5b7fb5;">Imex Incorporated</div>
<div class="t" style="left:762px;top:559.8px;font-size:12px;color:#5b7fb5;">0001</div>
<div class="t" style="left:827.5px;top:559.8px;font-size:12px;color:#333;">Aguas</div>
<div class="a" style="left:214px;top:604.0px;width:13px;height:13px;border:1px solid #666;border-radius:2px;background:#fff"></div>
<div class="a" style="left:263px;top:600.5px;width:55px;height:16.5px;background:#f0f0f0;border:1px solid #e6e6e6;border-radius:3px;"></div>
<div class="t" style="left:329.5px;top:600.8px;font-size:12px;color:#5b7fb5;">Ag21-0010</div>
<div class="t" style="left:433px;top:600.8px;font-size:12px;color:#333;">Thelesha</div>
<div class="a" style="left:521.8px;top:599.5px;width:72.4px;height:30.6px;border:1px solid #ccc;border-radius:3px;background:#fff;"></div>
<div class="t" style="left:532.5px;top:608.0px;width:50px;overflow:hidden;font-size:12px;color:#555">2021-12-1</div>
<div class="t" style="left:627px;top:600.8px;font-size:12px;color:#5b7fb5;">Imex Incorporated</div>
<div class="t" style="left:762px;top:600.8px;font-size:12px;color:#5b7fb5;">0001</div>
<div class="t" style="left:827.5px;top:600.8px;font-size:12px;color:#333;">Aguas</div>
<div class="a" style="left:214px;top:645.0px;width:13px;height:13px;border:1px solid #666;border-radius:2px;background:#fff"></div>
<div class="a" style="left:263px;top:641.5px;width:55px;height:16.5px;background:#f0f0f0;border:1px solid #e6e6e6;border-radius:3px;"></div>
<div class="t" style="left:329.5px;top:641.8px;font-size:12px;color:#5b7fb5;">BER21-0009</div>
<div class="t" style="left:433px;top:641.8px;font-size:12px;color:#333;">Thelesha</div>
<div class="a" style="left:521.8px;top:640.5px;width:72.4px;height:30.6px;border:1px solid #ccc;border-radius:3px;background:#fff;"></div>
<div class="t" style="left:532.5px;top:649.0px;width:50px;overflow:hidden;font-size:12px;color:#555">2021-12-1</div>
<div class="t" style="left:627px;top:641.8px;font-size:12px;color:#5b7fb5;">Imex Incorporated</div>
<div class="t" style="left:762px;top:641.8px;font-size:12px;color:#5b7fb5;">0001</div>
<div class="t" style="left:827.5px;top:641.8px;font-size:12px;color:#333;">Beer</div>
<div class="a" style="left:214px;top:686.0px;width:13px;height:13px;border:1px solid #666;border-radius:2px;background:#fff"></div>
<div class="a" style="left:263px;top:682.5px;width:55px;height:16.5px;background:#f0f0f0;border:1px solid #e6e6e6;border-radius:3px;"></div>
<div class="t" style="left:329.5px;top:682.8px;font-size:12px;color:#5b7fb5;">BWT21-0008</div>
<div class="t" style="left:433px;top:682.8px;font-size:12px;color:#333;">Thelesha</div>
<div class="a" style="left:521.8px;top:681.5px;width:72.4px;height:30.6px;border:1px solid #ccc;border-radius:3px;background:#fff;"></div>
<div class="t" style="left:532.5px;top:690.0px;width:50px;overflow:hidden;font-size:12px;color:#555">2021-12-1</div>
<div class="t" style="left:627px;top:682.8px;font-size:12px;color:#5b7fb5;">Imex Incorporated</div>
<div class="t" style="left:762px;top:682.8px;font-size:12px;color:#5b7fb5;">0001</div>
<div class="t" style="left:827.5px;top:682.8px;font-size:12px;color:#333;">Bread</div>
<div class="a" style="left:364.5px;top:527.5px;width:266px;height:179px;background:#fafafa;border:1px solid #d6d6d6;box-shadow:0 2px 10px rgba(0,0,0,0.28);"></div>
<div class="t" style="left:389.3px;top:535.3px;font-size:15px;color:#3c3c3c;letter-spacing:0.25px;">Open link in new tab</div>
<div class="t" style="left:389.3px;top:560.2px;font-size:15px;color:#3c3c3c;letter-spacing:0.25px;">Open link in new window</div>
<div class="t" style="left:389.3px;top:585.2px;font-size:15px;color:#3c3c3c;letter-spacing:0.39px;">Open link in incognito window</div>
<div class="t" style="left:389.3px;top:621.4px;font-size:15px;color:#3c3c3c;letter-spacing:-0.13px;">Save link as…</div>
<div class="t" style="left:389.3px;top:646.5px;font-size:15px;color:#3c3c3c;letter-spacing:0.01px;">Copy link address</div>
<div class="t" style="left:389.3px;top:681.7px;font-size:15px;color:#3c3c3c;letter-spacing:0.25px;">Inspect</div>
<div class="a" style="left:365.5px;top:611px;width:264px;height:1px;background:#e0e0e0;"></div>
<div class="a" style="left:365.5px;top:672px;width:264px;height:1px;background:#e0e0e0;"></div>
<svg style="left:0;top:0" width="971" height="720">
<defs><filter id="sh" x="-20%" y="-20%" width="140%" height="140%"><feGaussianBlur in="SourceAlpha" stdDeviation="1.6"/><feOffset dx="1.5" dy="2"/><feComponentTransfer><feFuncA type="linear" slope="0.45"/></feComponentTransfer><feMerge><feMergeNode/><feMergeNode in="SourceGraphic"/></feMerge></filter></defs>
<g filter="url(#sh)" fill="#eb9d3a" stroke="#eb9d3a">
<path d="M436.7 474.2 L396 506" stroke-width="2.8" stroke-linecap="round" fill="none"/>
<path d="M385 515.4 L394.2 500 L402.9 510.4 Z" stroke-width="1.5" stroke-linejoin="round"/>
<path d="M695 535.4 L565 541" stroke-width="2.8" stroke-linecap="round" fill="none"/>
<path d="M551.4 541.9 L568 534.9 L568.9 548 Z" stroke-width="1.5" stroke-linejoin="round"/>
</g></svg>
<!--CONTENT-->
</body></html>
